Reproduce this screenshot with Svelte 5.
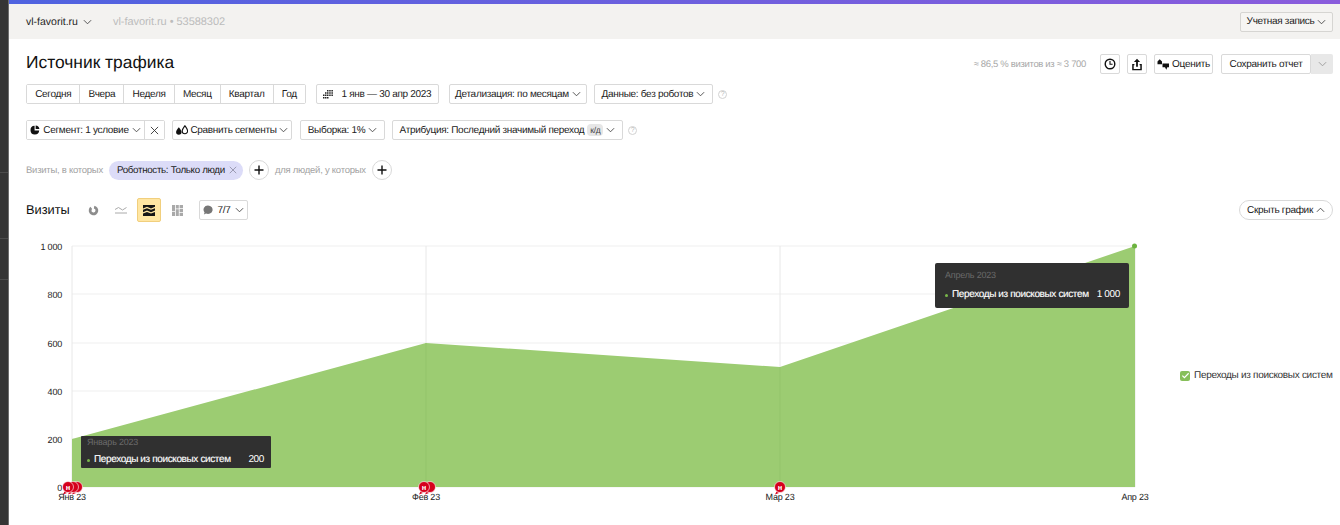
<script>
  const periods = ['Сегодня', 'Вчера', 'Неделя', 'Месяц', 'Квартал', 'Год'];
  const yTicks = [
    { label: '1 000', y: 246 },
    { label: '800', y: 294 },
    { label: '600', y: 343 },
    { label: '400', y: 391 },
    { label: '200', y: 439 },
    { label: '0', y: 487 }
  ];
  const xTicks = [
    { label: 'Янв 23', x: 72 },
    { label: 'Фев 23', x: 426 },
    { label: 'Мар 23', x: 780 },
    { label: 'Апр 23', x: 1135 }
  ];
</script>

{#snippet chev(cls = '')}
  <svg class="chev {cls}" viewBox="0 0 10 6" width="9" height="6"><path d="M1 1l4 4 4-4" fill="none" stroke="currentColor" stroke-width="1"/></svg>
{/snippet}

{#snippet help()}
  <span class="help">?</span>
{/snippet}

{#snippet plus()}
  <span class="plus"><svg viewBox="0 0 10 10" width="10" height="10"><path d="M5 .5v9M.5 5h9" stroke="#111" stroke-width="1.4"/></svg></span>
{/snippet}

{#snippet note(x, cls = '')}
  <path class={cls} d="M{x - 3.500} 491.500l-1.500 3 4-1.500z" fill="#d5001c" />
  <circle cx={x} cy="487" r="5.500" fill="#d5001c" stroke="#fff" stroke-width="0.600" />
{/snippet}

<div class="page">
  <div class="strip">
    <i class="l1"></i><i class="l2"></i><i class="l3"></i>
  </div>
  <div class="main">
    <div class="topline"></div>
    <header class="header">
      <span class="site">vl-favorit.ru {@render chev('site-chev')}</span>
      <span class="counter">vl-favorit.ru • 53588302</span>
      <button class="btn account">Учетная запись {@render chev()}</button>
    </header>

    <div class="content">
      <div class="title-row">
        <h1>Источник трафика</h1>
        <span class="sample">≈ 86,5 % визитов из ≈ 3 700</span>
        <button class="btn icon clock" aria-label="История">
          <svg viewBox="0 0 12 12" width="12" height="12"><circle cx="6" cy="6" r="4.800" fill="none" stroke="#111" stroke-width="1.400"/><path d="M6 3v3.200h2.600" fill="none" stroke="#111" stroke-width="1.100"/></svg>
        </button>
        <button class="btn icon share" aria-label="Экспорт">
          <svg viewBox="0 0 12 12" width="12" height="13"><path d="M6 .3L2.900 3.600h2.200v4.600h1.800V3.600h2.200zM1.200 5.500v6.300h9.600V5.500H8.600v1.300h.7v3.600H2.700V6.800h.7V5.500z" fill="#111"/></svg>
        </button>
        <button class="btn rate">
          <svg viewBox="0 0 13 11" width="13" height="11"><path d="M.5 2.500L2.700.3l2.300 2.200v2.800H.5zM5.500 4.500h6.500v3.700h-1.700L9.300 10.700 8 8.200H5.500z" fill="#111"/></svg>
          Оценить
        </button>
        <div class="save">
          <button class="btn save-main">Сохранить отчет</button>
          <button class="save-more" aria-label="Ещё">{@render chev()}</button>
        </div>
      </div>

      <div class="row row-periods">
        <div class="group">
          {#each periods as p}
            <button class="seg">{p}</button>
          {/each}
        </div>
        <button class="btn date">
          <svg viewBox="0 0 11 9" width="11" height="9" class="cal"><path d="M4 0h1.500v1.500H4zM6.200 0h1.500v1.500H6.200zM8.400 0h1.500v1.500H8.400zM2 2.300h1.500v1.500H2zM4 2.300h1.500v1.500H4zM6.200 2.300h1.500v1.500H6.200zM8.400 2.300h1.500v1.500H8.400zM0 4.600h1.500v1.500H0zM2 4.600h1.500v1.500H2zM4 4.600h1.500v1.500H4zM6.200 4.600h1.500v1.500H6.200zM8.400 4.600h1.500v1.500H8.400zM0 6.900h1.500v1.500H0zM2 6.900h1.500v1.500H2zM4 6.900h1.500v1.500H4z" fill="#222"/></svg>
          1 янв — 30 апр 2023
        </button>
        <button class="btn detail">Детализация: по месяцам {@render chev()}</button>
        <button class="btn data">Данные: без роботов {@render chev()}</button>
        {@render help()}
      </div>

      <div class="row row-segments">
        <div class="group">
          <button class="seg segment">
            <svg viewBox="0 0 12 12" width="10" height="10"><path d="M5.500 1a5.200 5.200 0 1 0 5.500 5.500H5.500zM6.800 .5v4.200H11.300A5 5 0 0 0 6.800 .5z" fill="#111"/></svg>
            Сегмент: 1 условие {@render chev()}
          </button>
          <button class="seg close" aria-label="Сбросить">
            <svg viewBox="0 0 10 10" width="9" height="9"><path d="M1 1l8 8M9 1l-8 8" stroke="#333" stroke-width="1"/></svg>
          </button>
        </div>
        <button class="btn compare">
          <svg viewBox="0 0 13 11" width="12" height="10"><path d="M3 2.500C4.500 4.500 6 6 6 7.800a3 3 0 0 1-6 0C0 6 1.500 4.500 3 2.500z" fill="#111"/><path d="M9.700 .8c1.400 2 3 3.800 3 5.800a3 3 0 0 1-6 0c0-2 1.600-3.800 3-5.800z" fill="none" stroke="#111" stroke-width="1.200"/></svg>
          Сравнить сегменты {@render chev()}
        </button>
        <button class="btn sample-btn">Выборка: 1% {@render chev()}</button>
        <button class="btn attr">Атрибуция: Последний значимый переход <span class="kd">к/д</span> {@render chev()}</button>
        {@render help()}
      </div>

      <div class="row row-filter">
        <span class="muted">Визиты, в которых</span>
        <span class="chip">Роботность: Только люди
          <svg viewBox="0 0 10 10" width="8" height="8"><path d="M1 1l8 8M9 1l-8 8" stroke="#8a8aa0" stroke-width="1"/></svg>
        </span>
        {@render plus()}
        <span class="muted people">для людей, у которых</span>
        {@render plus()}
      </div>

      <div class="row row-heading">
        <h2>Визиты</h2>
        <div class="chart-types">
          <span class="ct">
            <svg viewBox="0 0 12 12" width="11" height="11"><circle cx="6" cy="6" r="3.700" fill="none" stroke="#8d8d8d" stroke-width="3" stroke-dasharray="19.500 3.750" transform="rotate(-80 6 6)"/></svg>
          </span>
          <span class="ct">
            <svg viewBox="0 0 12 8" width="12" height="8"><path d="M0 3.500l3.500-2 4 2.500 4-2.500" fill="none" stroke="#aaa" stroke-width="1"/><path d="M0 7h12" stroke="#aaa" stroke-width="1"/></svg>
          </span>
          <span class="ct active">
            <svg viewBox="0 0 12 11" width="12" height="11"><path d="M0 0h12v1.800L8 3.400 4 1.800 0 3.400zM0 4.800l4-1.600 4 1.600 4-1.600v2.400L8 7.200 4 5.600 0 7.200zM0 8.600L4 7l4 1.600L12 7v4H0z" fill="#151515"/></svg>
          </span>
          <span class="ct">
            <svg viewBox="0 0 11 11" width="11" height="11"><path d="M0 0h3v6H0zM3.800 0h3v3.500h-3zM7.600 0H11v3H7.600zM3.800 4.300h3V11h-3zM7.600 3.800H11V7H7.600zM0 6.800h3V11H0zM7.600 7.800H11V11H7.600z" fill="#a9a9a9"/></svg>
          </span>
        </div>
        <button class="btn notes">
          <svg viewBox="0 0 11 11" width="10" height="10"><path d="M5.500.5a5 4.700 0 1 1-2.200 8.900L1 10.500l.7-2.300A4.700 4.700 0 0 1 5.500.500z" fill="#777"/></svg>
          <span>7/7</span> {@render chev()}
        </button>
        <button class="hide-chart">Скрыть график {@render chev('up')}</button>
      </div>

      <div class="chart-row">
        <div class="chart">
          <svg class="plot" viewBox="9 232 1171 293" width="1171" height="293">
            {#each yTicks as t}
              <line x1="72" x2="1135" y1={t.y} y2={t.y} stroke="#efefef" />
              <text x="62" y={t.y + 3.500} text-anchor="end">{t.label}</text>
            {/each}
            {#each xTicks as t}
              <line x1={t.x} x2={t.x} y1="246" y2="487" stroke="#e8e8e8" />
              <text x={t.x} y="500" text-anchor="middle">{t.label}</text>
            {/each}
            <polygon points="72,439 426,343 780,367 1135,246 1135,487 72,487" fill="#9ccc72" />
            <line x1="426" x2="426" y1="343" y2="487" stroke="#93c46a" />
            <line x1="780" x2="780" y1="367" y2="487" stroke="#93c46a" />
            <circle cx="1134.500" cy="246" r="2.500" fill="#6cb33f" />

            {@render note(77)}
            {@render note(73)}
            {@render note(68)}
            <text class="mark" x="68" y="489.500" text-anchor="middle">н</text>

            {@render note(430)}
            {@render note(424)}
            <text class="mark" x="424" y="489.500" text-anchor="middle">н</text>

            {@render note(780)}
            <text class="mark" x="780" y="489.500" text-anchor="middle">н</text>
          </svg>

          <div class="tip tip-jan">
            <div class="tip-title">Январь 2023</div>
            <div class="tip-row"><i></i><span class="tip-name">Переходы из поисковых систем</span><b>200</b></div>
          </div>
          <div class="tip tip-apr">
            <div class="tip-title">Апрель 2023</div>
            <div class="tip-row"><i></i><span class="tip-name">Переходы из поисковых систем</span><b>1 000</b></div>
          </div>
        </div>
        <div class="legend">
          <span class="check"><svg viewBox="0 0 10 10" width="9" height="9"><path d="M1.500 5.200l2.300 2.300 4.700-5" fill="none" stroke="#fff" stroke-width="1.300"/></svg></span>
          Переходы из поисковых систем
        </div>
      </div>
    </div>
  </div>
</div>

<style>
  :global(body) {
    margin: 0;
    background: #fff;
  }
  .page {
    display: flex;
    height: 525px;
    overflow: hidden;
    font-family: "Liberation Sans", Arial, sans-serif;
    font-size: 10px;
    letter-spacing: -0.3px;
    color: #222;
    text-rendering: geometricPrecision;
  }
  .strip {
    position: relative;
    flex: 0 0 8px;
    background: #353535;
    border-right: 1px solid #6e6e6e;
  }
  .strip i {
    position: absolute;
    left: 0;
    right: 0;
    height: 1px;
    background: #4c4c4c;
  }
  .l1 { top: 172px; }
  .l2 { top: 238px; }
  .l3 { top: 279px; }
  .main {
    flex: 1;
    min-width: 0;
  }
  .topline {
    height: 4px;
    background: linear-gradient(90deg, #4f63e0, #8a5cdc);
  }
  .header {
    display: flex;
    align-items: center;
    height: 35px;
    padding: 0 7px 0 17px;
    background: #f3f2f0;
  }
  .site {
    display: flex;
    align-items: center;
    gap: 5px;
    font-size: 10.500px;
    letter-spacing: 0;
    color: #1f1f1f;
  }
  .site-chev {
    color: #555;
  }
  .counter {
    margin-left: 21px;
    font-size: 11px;
    letter-spacing: -0.05px;
    color: #bcbcbc;
  }
  button {
    font: inherit;
    color: inherit;
    letter-spacing: inherit;
    text-rendering: inherit;
    padding: 0;
    margin: 0;
  }
  .btn {
    display: inline-flex;
    align-items: center;
    justify-content: center;
    gap: 3px;
    box-sizing: border-box;
    height: 20px;
    background: #fff;
    border: 1px solid #d9d9d9;
    border-radius: 2px;
    white-space: nowrap;
  }
  .chev {
    flex: none;
    color: #444;
  }
  .chev.up {
    transform: rotate(180deg);
  }
  .account {
    margin-left: auto;
    width: 93px;
    background: #f6f5f3;
    border-color: #d6d5d2;
  }
  .content {
    padding: 0 7px 0 17px;
  }
  .title-row {
    display: flex;
    align-items: center;
    height: 20px;
    margin-top: 15px;
  }
  h1 {
    margin: 0 0 3px;
    font-size: 17.400px;
    font-weight: 400;
    letter-spacing: 0;
    color: #111;
    white-space: nowrap;
  }
  .sample {
    margin-left: auto;
    margin-right: 14px;
    color: #a8a8a8;
    font-size: 9.500px;
    letter-spacing: -0.33px;
  }
  .icon {
    width: 20px;
    margin-right: 7px;
  }
  .rate {
    width: 59px;
    margin-right: 8px;
    gap: 2px;
  }
  .save {
    display: flex;
  }
  .save-main {
    width: 90px;
  }
  .save-more {
    width: 22px;
    height: 20px;
    border: 0;
    background: #e8e8e8;
    border-radius: 0 2px 2px 0;
    color: #999;
  }
  .save-more :global(svg) {
    color: #999;
  }
  .row {
    display: flex;
    align-items: center;
    height: 20px;
  }
  .row-periods {
    margin-top: 10px;
  }
  .row-segments {
    margin-top: 16px;
  }
  .row-filter {
    margin-top: 20px;
  }
  .group {
    display: flex;
    background: #fff;
    border: 1px solid #d9d9d9;
    border-radius: 2px;
    box-sizing: border-box;
    height: 20px;
  }
  .seg {
    display: inline-flex;
    align-items: center;
    justify-content: center;
    gap: 3px;
    background: #fff;
    border: 0;
    border-left: 1px solid #d9d9d9;
    padding: 0 8.130px;
    white-space: nowrap;
  }
  .seg:first-child {
    border-left: 0;
  }
  .date {
    width: 123px;
    margin-left: 10px;
    gap: 7px;
  }
  .cal {
    flex: none;
  }
  .detail {
    width: 138px;
    margin-left: 10px;
  }
  .data {
    width: 119px;
    margin-left: 7px;
  }
  .help {
    box-sizing: border-box;
    display: inline-flex;
    align-items: center;
    justify-content: center;
    width: 9px;
    height: 9px;
    margin-left: 5px;
    border: 1px solid #d2d2d2;
    border-radius: 50%;
    color: #c0c0c0;
    font-size: 7px;
    line-height: 1;
  }
  .segment {
    width: 117px;
    padding: 0;
  }
  .close {
    width: 20px;
    padding: 0;
  }
  .compare {
    width: 120px;
    margin-left: 7px;
    gap: 2px;
  }
  .sample-btn {
    width: 85px;
    margin-left: 8px;
  }
  .attr {
    width: 231px;
    margin-left: 7px;
  }
  .kd {
    padding: 1px 3px;
    background: #e6e6e6;
    border-radius: 4px;
    font-size: 8.500px;
    color: #444;
  }
  .muted {
    color: #a3a3a3;
    font-size: 9.500px;
    letter-spacing: -0.25px;
  }
  .chip {
    display: inline-flex;
    align-items: center;
    justify-content: space-between;
    box-sizing: border-box;
    width: 134px;
    height: 19px;
    margin-left: 6px;
    padding: 0 6px 0 8px;
    background: #dcdcf8;
    border-radius: 10px;
    color: #222;
    font-size: 9.800px;
    letter-spacing: -0.33px;
    white-space: nowrap;
  }
  .plus {
    box-sizing: border-box;
    display: inline-flex;
    align-items: center;
    justify-content: center;
    width: 20px;
    height: 20px;
    margin-left: 6px;
    border: 1px solid #d9d9d9;
    border-radius: 50%;
    background: #fff;
  }
  .people {
    margin-left: 6px;
  }
  .row-heading {
    height: 24px;
    margin-top: 18px;
  }
  h2 {
    margin: 0 0 2px;
    width: 55px;
    font-size: 12.800px;
    font-weight: 400;
    letter-spacing: 0;
    color: #111;
  }
  .chart-types {
    display: flex;
    align-items: center;
    gap: 4px;
  }
  .ct {
    display: flex;
    align-items: center;
    justify-content: center;
    width: 24px;
    height: 24px;
    box-sizing: border-box;
    border-radius: 2px;
  }
  .active {
    background: #ffe6a3;
    border: 1px solid #f1cf7d;
  }
  .notes {
    width: 49px;
    margin-left: 10px;
    gap: 4px;
  }
  .hide-chart {
    display: inline-flex;
    align-items: center;
    justify-content: center;
    gap: 3px;
    box-sizing: border-box;
    width: 94px;
    height: 20px;
    margin-left: auto;
    background: #fff;
    border: 1px solid #d9d9d9;
    border-radius: 10px;
    white-space: nowrap;
  }
  .chart-row {
    display: flex;
    align-items: center;
    margin: 10px 0 0 -17px;
  }
  .chart {
    position: relative;
    flex: none;
    width: 1171px;
    height: 293px;
  }
  .plot {
    display: block;
  }
  .plot text {
    font-size: 9px;
    letter-spacing: -0.2px;
    fill: #222;
  }
  .plot text.mark {
    font-size: 7.500px;
    font-weight: 700;
    fill: #fff;
  }
  .tip {
    position: absolute;
    box-sizing: border-box;
    background: #303030;
    border-radius: 1px;
    color: #fff;
    font-size: 10px;
    letter-spacing: -0.37px;
  }
  .tip-jan {
    left: 72px;
    top: 204px;
    width: 190px;
    height: 32px;
    padding: 1px 7px 0 6px;
  }
  .tip-apr {
    left: 926px;
    top: 31px;
    width: 194px;
    height: 45px;
    padding: 7px 10px 0 10px;
    border-radius: 2px;
  }
  .tip-title {
    color: #6a6a6a;
    font-size: 9px;
    letter-spacing: -0.2px;
    line-height: 11px;
  }
  .tip-row {
    display: flex;
    align-items: center;
    line-height: 12px;
    margin-top: 6px;
    white-space: nowrap;
  }
  .tip-apr .tip-row {
    margin-top: 8px;
  }
  .tip-row i {
    flex: none;
    width: 3px;
    height: 3px;
    margin-right: 4px;
    border-radius: 50%;
    background: #79b84a;
  }
  .tip-name {
    flex: 1;
    -webkit-text-stroke: 0.150px #fff;
  }
  .tip-row b {
    font-weight: 400;
    margin-left: 8px;
  }
  .legend {
    display: flex;
    align-items: center;
    gap: 4px;
    margin-bottom: 6px;
    white-space: nowrap;
    color: #333;
  }
  .check {
    display: flex;
    align-items: center;
    justify-content: center;
    width: 10px;
    height: 10px;
    background: #87bf5a;
    border-radius: 2px;
  }
</style>
